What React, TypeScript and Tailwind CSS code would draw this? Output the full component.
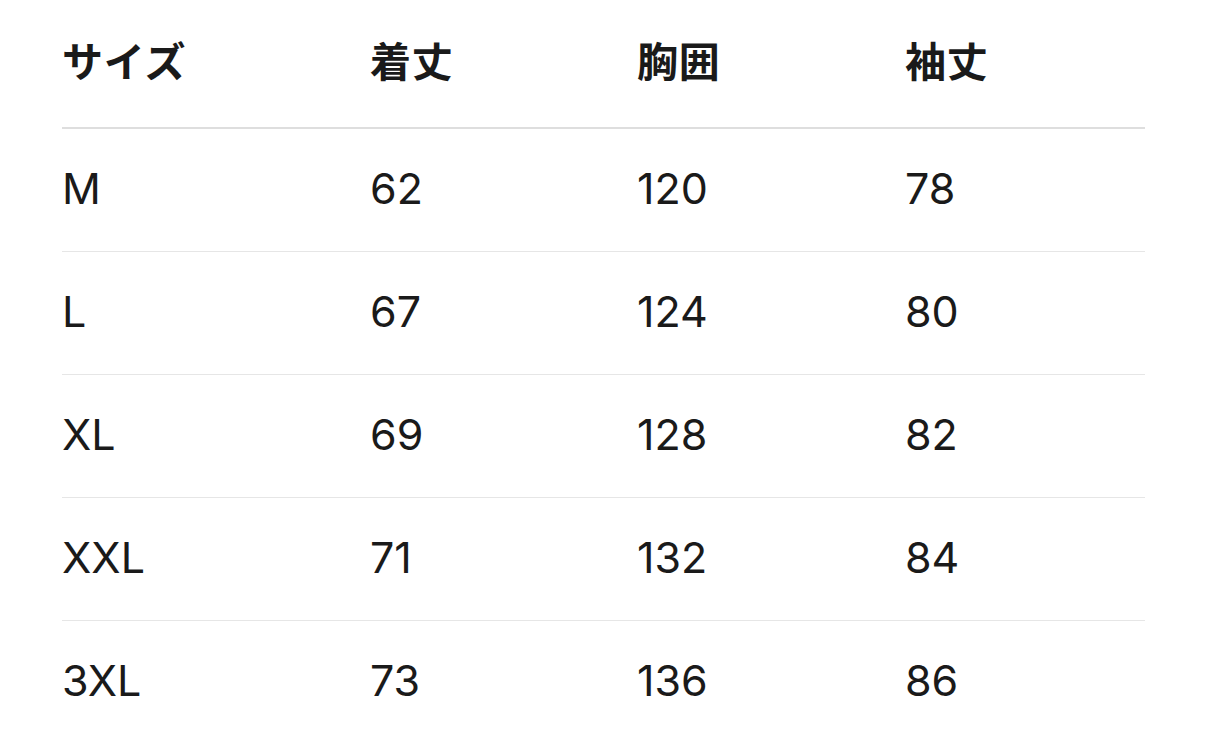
const HEAD = ["サイズ", "着丈", "胸囲", "袖丈"];

const ROWS = [
  ["M", "62", "120", "78"],
  ["L", "67", "124", "80"],
  ["XL", "69", "128", "82"],
  ["XXL", "71", "132", "84"],
  ["3XL", "73", "136", "86"],
];

const COLS = "grid grid-cols-[308px_267px_268px_240px]";

export default function App() {
  return (
    <div
      className="min-h-[750px] bg-white pl-[62px] text-[#1a1a1a]"
      style={{ fontFamily: 'Inter, "Noto Sans CJK JP", sans-serif' }}
    >
      <div className="w-[1083px]">
        {/* Header */}
        <div className={`${COLS} h-[129px] items-center border-b-2 border-[#dedede] pb-[2px]`}>
          {HEAD.map((h) => (
            <div key={h} className="text-[41px] font-bold leading-none tracking-[0.02em]">
              {h}
            </div>
          ))}
        </div>

        {/* Body rows */}
        {ROWS.map((r, i) => (
          <div
            key={r[0]}
            className={`${COLS} h-[123px] items-center pb-[4px] ${i < ROWS.length - 1 ? "border-b border-[#e6e6e6]" : ""}`}
          >
            {r.map((c, j) => (
              <div key={j} className="text-[43px] leading-none">
                {c}
              </div>
            ))}
          </div>
        ))}
      </div>
    </div>
  );
}
